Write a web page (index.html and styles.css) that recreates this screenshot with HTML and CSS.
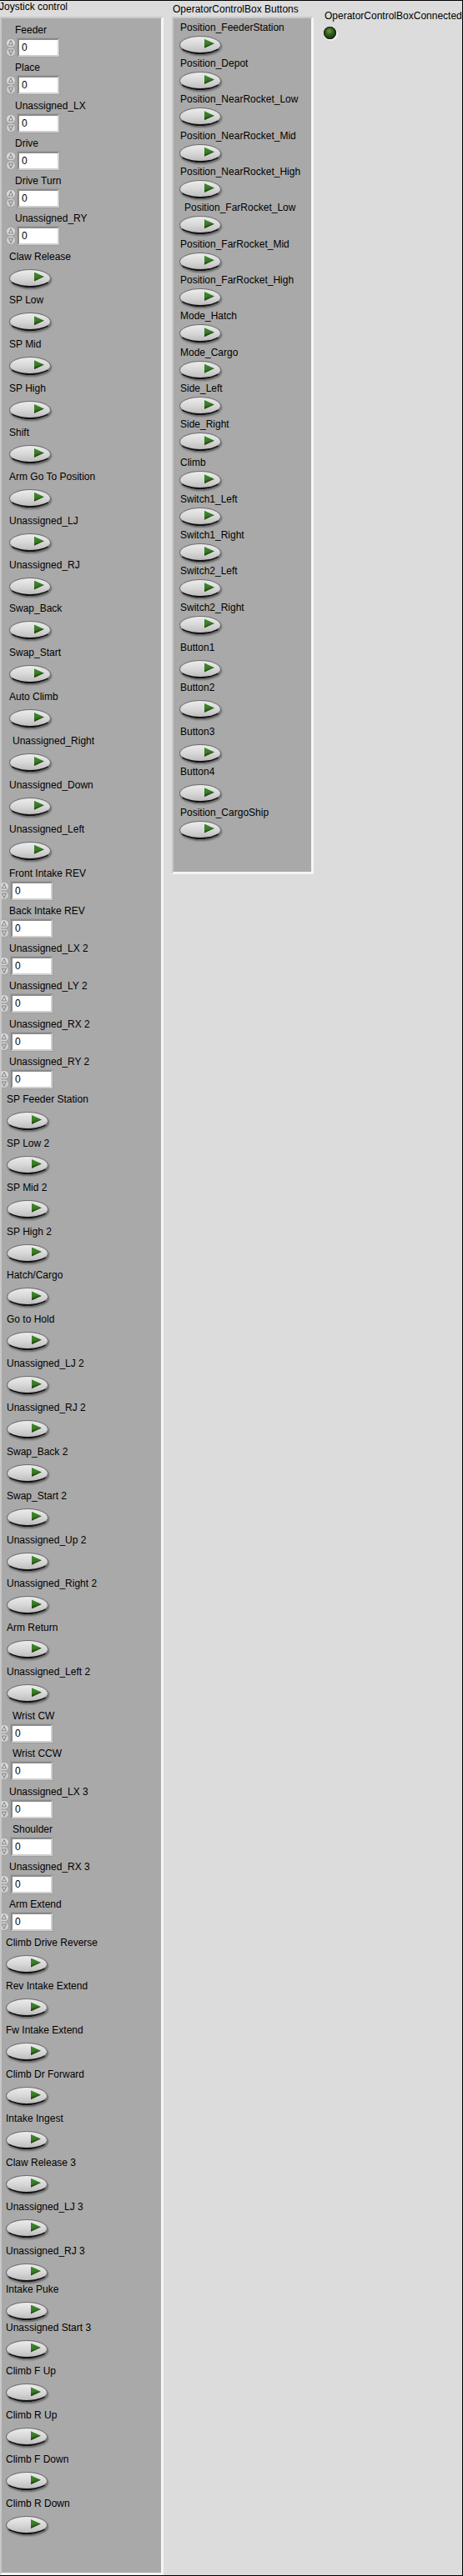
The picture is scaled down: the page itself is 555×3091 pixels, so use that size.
FILE: index.html
```html
<!DOCTYPE html>
<html>
<head>
<meta charset="utf-8">
<link rel="stylesheet" href="styles.css">
</head>
<body>
<div class="window">
  <div class="col col-joy">
    <div class="title title-joy">Joystick control</div>
    <div class="panel panel-joy">
      <div class="num g1"><div class="lbl">Feeder</div><div class="row"><svg class="spin" viewBox="0 0 12 22"><rect x="0.5" y="0.5" width="11" height="10.5" rx="5" fill="#d9d9d9" stroke="#9c9c9c"/><rect x="0.5" y="11" width="11" height="10.5" rx="5" fill="#cfcfcf" stroke="#9c9c9c"/><path d="M6 2.5 L8.5 8 L3.5 8 Z" fill="none" stroke="#808080"/><path d="M3.5 14 L8.5 14 L6 19.5 Z" fill="none" stroke="#808080"/></svg><div class="box">0</div></div></div>
      <div class="num g1"><div class="lbl">Place</div><div class="row"><svg class="spin" viewBox="0 0 12 22"><rect x="0.5" y="0.5" width="11" height="10.5" rx="5" fill="#d9d9d9" stroke="#9c9c9c"/><rect x="0.5" y="11" width="11" height="10.5" rx="5" fill="#cfcfcf" stroke="#9c9c9c"/><path d="M6 2.5 L8.5 8 L3.5 8 Z" fill="none" stroke="#808080"/><path d="M3.5 14 L8.5 14 L6 19.5 Z" fill="none" stroke="#808080"/></svg><div class="box">0</div></div></div>
      <div class="num g1"><div class="lbl">Unassigned_LX</div><div class="row"><svg class="spin" viewBox="0 0 12 22"><rect x="0.5" y="0.5" width="11" height="10.5" rx="5" fill="#d9d9d9" stroke="#9c9c9c"/><rect x="0.5" y="11" width="11" height="10.5" rx="5" fill="#cfcfcf" stroke="#9c9c9c"/><path d="M6 2.5 L8.5 8 L3.5 8 Z" fill="none" stroke="#808080"/><path d="M3.5 14 L8.5 14 L6 19.5 Z" fill="none" stroke="#808080"/></svg><div class="box">0</div></div></div>
      <div class="num g1"><div class="lbl">Drive</div><div class="row"><svg class="spin" viewBox="0 0 12 22"><rect x="0.5" y="0.5" width="11" height="10.5" rx="5" fill="#d9d9d9" stroke="#9c9c9c"/><rect x="0.5" y="11" width="11" height="10.5" rx="5" fill="#cfcfcf" stroke="#9c9c9c"/><path d="M6 2.5 L8.5 8 L3.5 8 Z" fill="none" stroke="#808080"/><path d="M3.5 14 L8.5 14 L6 19.5 Z" fill="none" stroke="#808080"/></svg><div class="box">0</div></div></div>
      <div class="num g1"><div class="lbl">Drive Turn</div><div class="row"><svg class="spin" viewBox="0 0 12 22"><rect x="0.5" y="0.5" width="11" height="10.5" rx="5" fill="#d9d9d9" stroke="#9c9c9c"/><rect x="0.5" y="11" width="11" height="10.5" rx="5" fill="#cfcfcf" stroke="#9c9c9c"/><path d="M6 2.5 L8.5 8 L3.5 8 Z" fill="none" stroke="#808080"/><path d="M3.5 14 L8.5 14 L6 19.5 Z" fill="none" stroke="#808080"/></svg><div class="box">0</div></div></div>
      <div class="num g1"><div class="lbl">Unassigned_RY</div><div class="row"><svg class="spin" viewBox="0 0 12 22"><rect x="0.5" y="0.5" width="11" height="10.5" rx="5" fill="#d9d9d9" stroke="#9c9c9c"/><rect x="0.5" y="11" width="11" height="10.5" rx="5" fill="#cfcfcf" stroke="#9c9c9c"/><path d="M6 2.5 L8.5 8 L3.5 8 Z" fill="none" stroke="#808080"/><path d="M3.5 14 L8.5 14 L6 19.5 Z" fill="none" stroke="#808080"/></svg><div class="box">0</div></div></div>

      <div class="bool b1"><div class="lbl">Claw Release</div><div class="btn"></div></div>
      <div class="bool b1"><div class="lbl">SP Low</div><div class="btn"></div></div>
      <div class="bool b1"><div class="lbl">SP Mid</div><div class="btn"></div></div>
      <div class="bool b1"><div class="lbl">SP High</div><div class="btn"></div></div>
      <div class="bool b1"><div class="lbl">Shift</div><div class="btn"></div></div>
      <div class="bool b1"><div class="lbl">Arm Go To Position</div><div class="btn"></div></div>
      <div class="bool b1"><div class="lbl">Unassigned_LJ</div><div class="btn"></div></div>
      <div class="bool b1"><div class="lbl">Unassigned_RJ</div><div class="btn"></div></div>
      <div class="bool b1"><div class="lbl">Swap_Back</div><div class="btn"></div></div>
      <div class="bool b1"><div class="lbl">Swap_Start</div><div class="btn"></div></div>
      <div class="bool b1"><div class="lbl">Auto Climb</div><div class="btn"></div></div>
      <div class="bool b1"><div class="lbl indent">Unassigned_Right</div><div class="btn"></div></div>
      <div class="bool b1"><div class="lbl">Unassigned_Down</div><div class="btn"></div></div>
      <div class="bool b1"><div class="lbl">Unassigned_Left</div><div class="btn"></div></div>

      <div class="num g2"><div class="lbl">Front Intake REV</div><div class="row"><svg class="spin" viewBox="0 0 12 22"><rect x="0.5" y="0.5" width="11" height="10.5" rx="5" fill="#d9d9d9" stroke="#9c9c9c"/><rect x="0.5" y="11" width="11" height="10.5" rx="5" fill="#cfcfcf" stroke="#9c9c9c"/><path d="M6 2.5 L8.5 8 L3.5 8 Z" fill="none" stroke="#808080"/><path d="M3.5 14 L8.5 14 L6 19.5 Z" fill="none" stroke="#808080"/></svg><div class="box">0</div></div></div>
      <div class="num g2"><div class="lbl">Back Intake REV</div><div class="row"><svg class="spin" viewBox="0 0 12 22"><rect x="0.5" y="0.5" width="11" height="10.5" rx="5" fill="#d9d9d9" stroke="#9c9c9c"/><rect x="0.5" y="11" width="11" height="10.5" rx="5" fill="#cfcfcf" stroke="#9c9c9c"/><path d="M6 2.5 L8.5 8 L3.5 8 Z" fill="none" stroke="#808080"/><path d="M3.5 14 L8.5 14 L6 19.5 Z" fill="none" stroke="#808080"/></svg><div class="box">0</div></div></div>
      <div class="num g2"><div class="lbl">Unassigned_LX 2</div><div class="row"><svg class="spin" viewBox="0 0 12 22"><rect x="0.5" y="0.5" width="11" height="10.5" rx="5" fill="#d9d9d9" stroke="#9c9c9c"/><rect x="0.5" y="11" width="11" height="10.5" rx="5" fill="#cfcfcf" stroke="#9c9c9c"/><path d="M6 2.5 L8.5 8 L3.5 8 Z" fill="none" stroke="#808080"/><path d="M3.5 14 L8.5 14 L6 19.5 Z" fill="none" stroke="#808080"/></svg><div class="box">0</div></div></div>
      <div class="num g2"><div class="lbl">Unassigned_LY 2</div><div class="row"><svg class="spin" viewBox="0 0 12 22"><rect x="0.5" y="0.5" width="11" height="10.5" rx="5" fill="#d9d9d9" stroke="#9c9c9c"/><rect x="0.5" y="11" width="11" height="10.5" rx="5" fill="#cfcfcf" stroke="#9c9c9c"/><path d="M6 2.5 L8.5 8 L3.5 8 Z" fill="none" stroke="#808080"/><path d="M3.5 14 L8.5 14 L6 19.5 Z" fill="none" stroke="#808080"/></svg><div class="box">0</div></div></div>
      <div class="num g2"><div class="lbl">Unassigned_RX 2</div><div class="row"><svg class="spin" viewBox="0 0 12 22"><rect x="0.5" y="0.5" width="11" height="10.5" rx="5" fill="#d9d9d9" stroke="#9c9c9c"/><rect x="0.5" y="11" width="11" height="10.5" rx="5" fill="#cfcfcf" stroke="#9c9c9c"/><path d="M6 2.5 L8.5 8 L3.5 8 Z" fill="none" stroke="#808080"/><path d="M3.5 14 L8.5 14 L6 19.5 Z" fill="none" stroke="#808080"/></svg><div class="box">0</div></div></div>
      <div class="num g2"><div class="lbl">Unassigned_RY 2</div><div class="row"><svg class="spin" viewBox="0 0 12 22"><rect x="0.5" y="0.5" width="11" height="10.5" rx="5" fill="#d9d9d9" stroke="#9c9c9c"/><rect x="0.5" y="11" width="11" height="10.5" rx="5" fill="#cfcfcf" stroke="#9c9c9c"/><path d="M6 2.5 L8.5 8 L3.5 8 Z" fill="none" stroke="#808080"/><path d="M3.5 14 L8.5 14 L6 19.5 Z" fill="none" stroke="#808080"/></svg><div class="box">0</div></div></div>

      <div class="bool b3"><div class="lbl">SP Feeder Station</div><div class="btn"></div></div>
      <div class="bool b3"><div class="lbl">SP Low 2</div><div class="btn"></div></div>
      <div class="bool b3"><div class="lbl">SP Mid 2</div><div class="btn"></div></div>
      <div class="bool b3"><div class="lbl">SP High 2</div><div class="btn"></div></div>
      <div class="bool b3"><div class="lbl">Hatch/Cargo</div><div class="btn"></div></div>
      <div class="bool b3"><div class="lbl">Go to Hold</div><div class="btn"></div></div>
      <div class="bool b3"><div class="lbl">Unassigned_LJ 2</div><div class="btn"></div></div>
      <div class="bool b3"><div class="lbl">Unassigned_RJ 2</div><div class="btn"></div></div>
      <div class="bool b3"><div class="lbl">Swap_Back 2</div><div class="btn"></div></div>
      <div class="bool b3"><div class="lbl">Swap_Start 2</div><div class="btn"></div></div>
      <div class="bool b3"><div class="lbl">Unassigned_Up 2</div><div class="btn"></div></div>
      <div class="bool b3"><div class="lbl">Unassigned_Right 2</div><div class="btn"></div></div>
      <div class="bool b3"><div class="lbl">Arm Return</div><div class="btn"></div></div>
      <div class="bool b3"><div class="lbl">Unassigned_Left 2</div><div class="btn"></div></div>

      <div class="num g2 gap-before"><div class="lbl indent">Wrist CW</div><div class="row"><svg class="spin" viewBox="0 0 12 22"><rect x="0.5" y="0.5" width="11" height="10.5" rx="5" fill="#d9d9d9" stroke="#9c9c9c"/><rect x="0.5" y="11" width="11" height="10.5" rx="5" fill="#cfcfcf" stroke="#9c9c9c"/><path d="M6 2.5 L8.5 8 L3.5 8 Z" fill="none" stroke="#808080"/><path d="M3.5 14 L8.5 14 L6 19.5 Z" fill="none" stroke="#808080"/></svg><div class="box">0</div></div></div>
      <div class="num g2"><div class="lbl indent">Wrist CCW</div><div class="row"><svg class="spin" viewBox="0 0 12 22"><rect x="0.5" y="0.5" width="11" height="10.5" rx="5" fill="#d9d9d9" stroke="#9c9c9c"/><rect x="0.5" y="11" width="11" height="10.5" rx="5" fill="#cfcfcf" stroke="#9c9c9c"/><path d="M6 2.5 L8.5 8 L3.5 8 Z" fill="none" stroke="#808080"/><path d="M3.5 14 L8.5 14 L6 19.5 Z" fill="none" stroke="#808080"/></svg><div class="box">0</div></div></div>
      <div class="num g2"><div class="lbl">Unassigned_LX 3</div><div class="row"><svg class="spin" viewBox="0 0 12 22"><rect x="0.5" y="0.5" width="11" height="10.5" rx="5" fill="#d9d9d9" stroke="#9c9c9c"/><rect x="0.5" y="11" width="11" height="10.5" rx="5" fill="#cfcfcf" stroke="#9c9c9c"/><path d="M6 2.5 L8.5 8 L3.5 8 Z" fill="none" stroke="#808080"/><path d="M3.5 14 L8.5 14 L6 19.5 Z" fill="none" stroke="#808080"/></svg><div class="box">0</div></div></div>
      <div class="num g2"><div class="lbl indent">Shoulder</div><div class="row"><svg class="spin" viewBox="0 0 12 22"><rect x="0.5" y="0.5" width="11" height="10.5" rx="5" fill="#d9d9d9" stroke="#9c9c9c"/><rect x="0.5" y="11" width="11" height="10.5" rx="5" fill="#cfcfcf" stroke="#9c9c9c"/><path d="M6 2.5 L8.5 8 L3.5 8 Z" fill="none" stroke="#808080"/><path d="M3.5 14 L8.5 14 L6 19.5 Z" fill="none" stroke="#808080"/></svg><div class="box">0</div></div></div>
      <div class="num g2"><div class="lbl">Unassigned_RX 3</div><div class="row"><svg class="spin" viewBox="0 0 12 22"><rect x="0.5" y="0.5" width="11" height="10.5" rx="5" fill="#d9d9d9" stroke="#9c9c9c"/><rect x="0.5" y="11" width="11" height="10.5" rx="5" fill="#cfcfcf" stroke="#9c9c9c"/><path d="M6 2.5 L8.5 8 L3.5 8 Z" fill="none" stroke="#808080"/><path d="M3.5 14 L8.5 14 L6 19.5 Z" fill="none" stroke="#808080"/></svg><div class="box">0</div></div></div>
      <div class="num g2"><div class="lbl">Arm Extend</div><div class="row"><svg class="spin" viewBox="0 0 12 22"><rect x="0.5" y="0.5" width="11" height="10.5" rx="5" fill="#d9d9d9" stroke="#9c9c9c"/><rect x="0.5" y="11" width="11" height="10.5" rx="5" fill="#cfcfcf" stroke="#9c9c9c"/><path d="M6 2.5 L8.5 8 L3.5 8 Z" fill="none" stroke="#808080"/><path d="M3.5 14 L8.5 14 L6 19.5 Z" fill="none" stroke="#808080"/></svg><div class="box">0</div></div></div>

      <div class="bool b5"><div class="lbl">Climb Drive Reverse</div><div class="btn"></div></div>
      <div class="bool b5"><div class="lbl">Rev Intake Extend</div><div class="btn"></div></div>
      <div class="bool b5"><div class="lbl">Fw Intake Extend</div><div class="btn"></div></div>
      <div class="bool b5"><div class="lbl">Climb Dr Forward</div><div class="btn"></div></div>
      <div class="bool b5"><div class="lbl">Intake Ingest</div><div class="btn"></div></div>
      <div class="bool b5"><div class="lbl">Claw Release 3</div><div class="btn"></div></div>
      <div class="bool b5"><div class="lbl">Unassigned_LJ 3</div><div class="btn"></div></div>
      <div class="bool b5 tight"><div class="lbl">Unassigned_RJ 3</div><div class="btn"></div></div>
      <div class="bool b5 tight"><div class="lbl">Intake Puke</div><div class="btn"></div></div>
      <div class="bool b5"><div class="lbl">Unassigned Start 3</div><div class="btn"></div></div>
      <div class="bool b5"><div class="lbl">Climb F Up</div><div class="btn"></div></div>
      <div class="bool b5"><div class="lbl">Climb R Up</div><div class="btn"></div></div>
      <div class="bool b5"><div class="lbl">Climb F Down</div><div class="btn"></div></div>
      <div class="bool b5"><div class="lbl">Climb R Down</div><div class="btn"></div></div>
    </div>
  </div>

  <div class="col col-ocb">
    <div class="title title-ocb">OperatorControlBox Buttons</div>
    <div class="panel panel-ocb">
      <div class="bool m"><div class="lbl">Position_FeederStation</div><div class="btn"></div></div>
      <div class="bool m"><div class="lbl">Position_Depot</div><div class="btn"></div></div>
      <div class="bool m"><div class="lbl">Position_NearRocket_Low</div><div class="btn"></div></div>
      <div class="bool m"><div class="lbl">Position_NearRocket_Mid</div><div class="btn"></div></div>
      <div class="bool m"><div class="lbl">Position_NearRocket_High</div><div class="btn"></div></div>
      <div class="bool m"><div class="lbl indent">Position_FarRocket_Low</div><div class="btn"></div></div>
      <div class="bool m"><div class="lbl">Position_FarRocket_Mid</div><div class="btn"></div></div>
      <div class="bool m"><div class="lbl">Position_FarRocket_High</div><div class="btn"></div></div>
      <div class="bool m"><div class="lbl">Mode_Hatch</div><div class="btn"></div></div>
      <div class="bool m"><div class="lbl">Mode_Cargo</div><div class="btn"></div></div>
      <div class="bool m"><div class="lbl">Side_Left</div><div class="btn"></div></div>
      <div class="bool m"><div class="lbl">Side_Right</div><div class="btn"></div></div>
      <div class="bool m mt9"><div class="lbl">Climb</div><div class="btn"></div></div>
      <div class="bool m mt6"><div class="lbl">Switch1_Left</div><div class="btn"></div></div>
      <div class="bool m mt3"><div class="lbl">Switch1_Right</div><div class="btn"></div></div>
      <div class="bool m mt2"><div class="lbl">Switch2_Left</div><div class="btn"></div></div>
      <div class="bool m mt1"><div class="lbl">Switch2_Right</div><div class="btn"></div></div>
      <div class="bool m lg mt11"><div class="lbl">Button1</div><div class="btn"></div></div>
      <div class="bool m lg mt3"><div class="lbl">Button2</div><div class="btn"></div></div>
      <div class="bool m lg mt11"><div class="lbl">Button3</div><div class="btn"></div></div>
      <div class="bool m lg mt2"><div class="lbl">Button4</div><div class="btn"></div></div>
      <div class="bool m mt2"><div class="lbl">Position_CargoShip</div><div class="btn"></div></div>
    </div>
  </div>

  <div class="col col-led">
    <div class="title title-led">OperatorControlBoxConnected</div>
    <div class="led"></div>
  </div>
</div>
</body>
</html>
```
FILE: styles.css
```css
* { box-sizing: border-box; }

body {
  margin: 0;
  font-family: "Liberation Sans", Arial, sans-serif;
  font-size: 12px;
  color: #000;
}

.window {
  width: 555px;
  height: 3091px;
  background: #dcdcdc;
  border-top: 1px solid #000;
  border-right: 1px solid #000;
  border-bottom: 1px solid #000;
  display: flex;
  align-items: stretch;
  overflow: hidden;
}

.col { display: flex; flex-direction: column; }
.col-joy { width: 196px; flex: none; }
.col-ocb { width: 170px; margin-left: 10px; flex: none; }
.col-led { margin-left: 12px; flex: none; }

.title {
  height: 19px;
  line-height: 14px;
  white-space: nowrap;
  flex: none;
}
.title-joy { margin-left: -1px; }
.title-ocb { padding-top: 3.4px; padding-left: 1px; }
.title-led { height: auto; padding-top: 11.4px; padding-left: 1px; }

.panel {
  background: #a9a9a9;
  border-style: solid;
  border-width: 2px 3px 3px 2px;
  border-color: #c8c8c8 #f5f5f5 #f5f5f5 #c8c8c8;
  overflow: hidden;
}
.panel-joy { flex: 1; padding-top: 7px; }
.panel-ocb { height: 1029px; flex: none; padding-top: 3.7px; }

.lbl {
  height: 14px;
  line-height: 14px;
  white-space: nowrap;
}

/* numeric controls */
.num { margin-bottom: 6.25px; }
.num .row { display: flex; margin-top: 3px; height: 22px; }
.spin { width: 12px; height: 22px; flex: none; }
.box {
  width: 50px;
  height: 22px;
  margin-left: 2px;
  background: #fff;
  border: 2px solid;
  border-color: #8a8a8a #cfcfcf #cfcfcf #8a8a8a;
  box-shadow: 0 0 0 1px #9e9e9e;
  padding-left: 3px;
  line-height: 18px;
  color: #000;
}
.g1 .lbl { padding-left: 16px; }
.g1 .spin { margin-left: 5px; }
.g2 .lbl { padding-left: 9px; }
.g2 .spin { margin-left: -3px; }
.gap-before { margin-top: 10px; }
.lbl.indent { padding-left: 13px; }
.g1 .lbl.indent { padding-left: 20px; }

/* boolean buttons */
.bool { margin-bottom: 10.87px; }
.btn {
  position: relative;
  width: 50px;
  height: 20px;
  margin-top: 8px;
}
.btn::before {
  content: "";
  position: absolute;
  left: 0;
  top: 0;
  width: 48px;
  height: 19px;
  border-radius: 50%;
  background: linear-gradient(#ececec, #d6d6d6 55%, #bdbdbd);
  border: 1px solid #6c6c6c;
  border-bottom: 2px solid #141414;
  box-shadow: 1px 2px 2px rgba(60, 60, 60, 0.6);
}
.btn::after {
  content: "";
  position: absolute;
  left: 30px;
  top: 4px;
  width: 12px;
  height: 11px;
  clip-path: polygon(0 0, 100% 50%, 0 100%);
  background: linear-gradient(165deg, #3f8d2d 0, #347a25 50%, #2b4612 68%, #3b2c0c 100%);
}

.b1 .lbl, .b1 .btn { margin-left: 9px; }
.b1 .lbl.indent { margin-left: 13px; padding-left: 0; }
.b3 .lbl, .b3 .btn { margin-left: 6px; }
.b5 .lbl, .b5 .btn { margin-left: 5px; }
.tight { margin-bottom: 4px; }

/* middle panel */
.bool.m { margin-bottom: 6.33px; }
.m .lbl { padding-left: 8px; }
.m .lbl.indent { padding-left: 13px; }
.m .btn { margin-left: 7px; margin-top: 3px; }
.m.lg .btn { margin-top: 8px; }
.mt1 { margin-top: 1px; }
.mt2 { margin-top: 2px; }
.mt3 { margin-top: 3px; }
.mt6 { margin-top: 6px; }
.mt9 { margin-top: 9px; }
.mt11 { margin-top: 11px; }

/* LED */
.led {
  width: 15px;
  height: 15px;
  margin-top: 5.6px;
  border-radius: 50%;
  background: radial-gradient(circle at 45% 35%, #6f9350 0, #335f1c 35%, #18380f 70%, #0a1806 100%);
  box-shadow: 1px 1px 0 1px #f2f2f2, inset 0 0 0 1px #1b1b1b;
}
```
